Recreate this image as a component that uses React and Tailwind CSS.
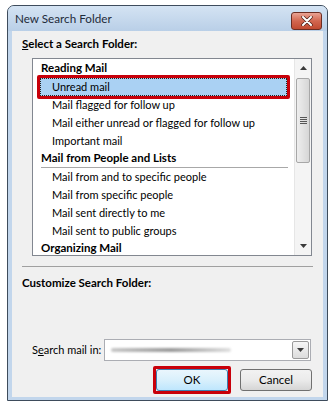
import React from 'react'

const font = { fontFamily: 'Lato, "Noto Sans", sans-serif' }

function Header({ label }) {
  return (
    <div className="h-[18px] ml-[8px] mr-[6px] border-b border-[#a8a8a8] text-[11.5px] leading-[15px] font-bold text-black whitespace-nowrap">
      {label}
    </div>
  )
}

function Item({ label }) {
  return <div className="h-[18px] pl-[19px] text-[11px] leading-[18px] text-black whitespace-nowrap">{label}</div>
}

function SelectedItem({ label }) {
  return (
    <div className="relative h-[18px] mx-[7px]">
      <div className="h-full bg-[#aad1f3] border border-dotted border-[#222] pl-[11px] text-[11px] leading-[16px] text-black">
        {label}
      </div>
      <div className="absolute -inset-[3px] border-[3px] border-[#c8000a] rounded-[2px]" />
    </div>
  )
}

function Arrow({ down }) {
  return (
    <svg width="7" height="4" viewBox="0 0 7 4">
      <path d={down ? 'M0 0h7L3.5 4z' : 'M0 4h7L3.5 0z'} fill="#3a3a3a" />
    </svg>
  )
}

function Scrollbar() {
  return (
    <div className="w-[17px] h-full flex flex-col bg-[#f4f4f4] border-l border-[#e6e6e6]">
      <div className="h-[18px] flex items-center justify-center">
        <Arrow />
      </div>
      <div className="flex-1 px-[1px]">
        <div className="mt-[1px] h-[85px] rounded-[2px] border border-[#a7a7a7] bg-gradient-to-r from-[#eeeeee] to-[#d6d6d6] flex flex-col items-center justify-center gap-[1px]">
          <div className="w-[7px] h-[1px] bg-[#555]" />
          <div className="w-[7px] h-[1px] bg-[#555]" />
          <div className="w-[7px] h-[1px] bg-[#555]" />
          <div className="w-[7px] h-[1px] bg-[#555]" />
        </div>
      </div>
      <div className="h-[18px] flex items-center justify-center">
        <Arrow down />
      </div>
    </div>
  )
}

function Button({ label, primary }) {
  return (
    <div
      className={`w-[72px] h-[22px] rounded-[3px] border flex items-center justify-center text-[11.5px] text-black ${
        primary
          ? 'border-[#3c7fb1] bg-gradient-to-b from-[#eaf6fd] via-[#d9f0fc] to-[#bee6fd]'
          : 'border-[#707070] bg-gradient-to-b from-[#f2f2f2] via-[#ebebeb] to-[#d5d5d5]'
      }`}
    >
      {label}
    </div>
  )
}

export default function App() {
  return (
    <div className="w-[333px] h-[404px] bg-white pt-[5px] pl-[7px]" style={font}>
      <div className="w-[321px] h-[396px] border border-[#3e4c5c] rounded-t-[7px] bg-[#c2d6ec] flex flex-col">
        {/* Title bar */}
        <div className="h-[25px] flex items-center justify-between pl-[7px] pr-[5px] rounded-t-[6px] bg-gradient-to-b from-[#d4e3f3] to-[#b9cfe7]">
          <span className="text-[11.7px] text-[#1e2b3a]">New Search Folder</span>
          <div className="w-[31px] h-[18px] mt-[4px] rounded-[3px] border border-[#6b2d22] bg-gradient-to-b from-[#e9a394] via-[#d2664f] to-[#c14a30] flex items-center justify-center">
            <svg width="12" height="10" viewBox="0 0 12 10">
              <path d="M2 1l8 8M10 1l-8 8" stroke="#4b2119" strokeWidth="3.4" strokeLinecap="round" />
              <path d="M2 1l8 8M10 1l-8 8" stroke="#ffffff" strokeWidth="2" strokeLinecap="round" />
            </svg>
          </div>
        </div>

        {/* Client area */}
        <div className="mx-[4px] mb-[3px] flex-1 bg-[#f0f0f0] flex flex-col text-black">
          <div className="pl-[10px] pt-[5px] h-[27px] text-[11.5px] leading-[16px] font-bold">
            <span className="underline">S</span>elect a Search Folder:
          </div>

          <div className="ml-[20px] w-[280px] h-[198px] border border-[#828790] bg-white flex">
            <div className="flex-1 pt-[1px] overflow-hidden">
              <Header label="Reading Mail" />
              <SelectedItem label="Unread mail" />
              <Item label="Mail flagged for follow up" />
              <Item label="Mail either unread or flagged for follow up" />
              <Item label="Important mail" />
              <Header label="Mail from People and Lists" />
              <Item label="Mail from and to specific people" />
              <Item label="Mail from specific people" />
              <Item label="Mail sent directly to me" />
              <Item label="Mail sent to public groups" />
              <Header label="Organizing Mail" />
            </div>
            <Scrollbar />
          </div>

          <div className="ml-[10px] mt-[10px] w-[291px] border-t border-[#a0a0a0]" />

          <div className="pl-[10px] pt-[8px] text-[11.5px] leading-[16px] font-bold">Customize Search Folder:</div>

          <div className="flex-1" />

          <div className="flex items-center pl-[20px] h-[22px]">
            <span className="w-[72px] text-[11px] whitespace-nowrap">
              S<span className="underline">e</span>arch mail in:
            </span>
            <div className="w-[207px] h-[22px] border border-[#abadb3] bg-white flex items-center">
              <div className="flex-1 pl-[6px]">
                <div className="w-[120px] h-[4px] rounded-full bg-gradient-to-r from-[#c8c8c8] via-[#9a9a9a] to-[#e0e0e0] blur-[1px]" />
              </div>
              <div className="w-[17px] h-[18px] mr-[1px] border border-[#9a9a9a] rounded-[2px] bg-gradient-to-b from-[#f6f6f6] to-[#dcdcdc] flex items-center justify-center">
                <Arrow down />
              </div>
            </div>
          </div>

          <div className="flex justify-end gap-[12px] pr-[11px] mt-[8px] mb-[6px]">
            <div className="relative">
              <Button label="OK" primary />
              <div className="absolute -inset-[3px] border-[3px] border-[#c8000a] rounded-[2px]" />
            </div>
            <Button label="Cancel" />
          </div>
        </div>
      </div>
    </div>
  )
}
